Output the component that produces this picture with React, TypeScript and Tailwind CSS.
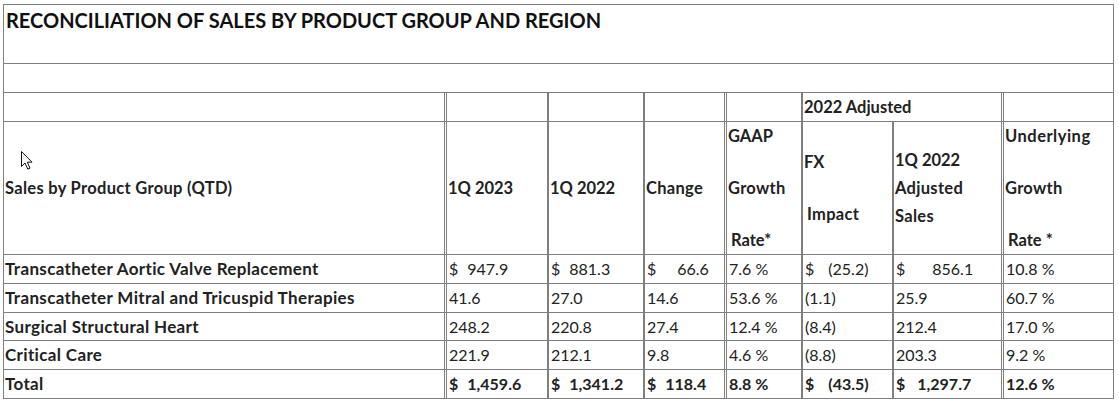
import React from "react";

const F = { fontFamily: "Lato, 'Open Sans', sans-serif" };

function Cursor() {
  return (
    <svg
      className="absolute left-[20px] top-[150px]"
      width="14"
      height="21"
      viewBox="0 0 14 21"
    >
      <path
        d="M1.5 1.5 L1.5 16.5 L5 13 L7.8 19.2 L10 18.2 L7.3 12.2 L12 12.2 Z"
        fill="#fff"
        stroke="#111"
        strokeWidth="1"
        strokeLinejoin="miter"
      />
    </svg>
  );
}

const L1 = "border-l border-t border-[#7f7f7f]";
const L2 = "border-l-2 border-t border-[#7f7f7f] border-t-[#7f7f7f]";
const L3 = "border-l-[3px] border-double border-t border-t-solid border-[#7f7f7f]";

function Cell({
  b,
  className = "",
  children,
}: {
  b: string;
  className?: string;
  children?: React.ReactNode;
}) {
  return <div className={`${b} ${className}`}>{children}</div>;
}

type Row = {
  label: string;
  bold?: boolean;
  c2: React.ReactNode;
  c3: React.ReactNode;
  c4: React.ReactNode;
  c5: string;
  c6: React.ReactNode;
  c7: React.ReactNode;
  c8: string;
};

function Money({ off, v }: { off: string; v: string }) {
  return (
    <span className="flex">
      <span>$</span>
      <span className={off}>{v}</span>
    </span>
  );
}

const rows: Row[] = [
  {
    label: "Transcatheter Aortic Valve Replacement",
    c2: <Money off="ml-[9px]" v="947.9" />,
    c3: <Money off="ml-[9px]" v="881.3" />,
    c4: <Money off="ml-[21px]" v="66.6" />,
    c5: "7.6 %",
    c6: <Money off="ml-[14px]" v="(25.2)" />,
    c7: <Money off="ml-[27px]" v="856.1" />,
    c8: "10.8 %",
  },
  {
    label: "Transcatheter Mitral and Tricuspid Therapies",
    c2: "41.6",
    c3: "27.0",
    c4: "14.6",
    c5: "53.6 %",
    c6: "(1.1)",
    c7: "25.9",
    c8: "60.7 %",
  },
  {
    label: "Surgical Structural Heart",
    c2: "248.2",
    c3: "220.8",
    c4: "27.4",
    c5: "12.4 %",
    c6: "(8.4)",
    c7: "212.4",
    c8: "17.0 %",
  },
  {
    label: "Critical Care",
    c2: "221.9",
    c3: "212.1",
    c4: "9.8",
    c5: "4.6 %",
    c6: "(8.8)",
    c7: "203.3",
    c8: "9.2 %",
  },
  {
    label: "Total",
    bold: true,
    c2: <Money off="ml-[9px]" v="1,459.6" />,
    c3: <Money off="ml-[9px]" v="1,341.2" />,
    c4: <Money off="ml-[9px]" v="118.4" />,
    c5: "8.8 %",
    c6: <Money off="ml-[14px]" v="(43.5)" />,
    c7: <Money off="ml-[12px]" v="1,297.7" />,
    c8: "12.6 %",
  },
];

export default function App() {
  const dataCell = "flex items-center pl-[2px] text-[16px]";
  const hdr = "text-[16.5px] font-bold";
  return (
    <div className="relative min-h-[403px] w-[1119px] bg-white pl-[3px] pt-[4px] text-[#222]" style={F}>
      <div className="grid w-[1111px] grid-cols-[441px_103px_96px_81px_77px_91px_109px_112px] grid-rows-[59px_29px_29px_133px_29px_29px_28px_29px_29px] border-b border-r border-[#7f7f7f]">
        {/* title */}
        <div className="col-span-8 border-l border-t border-[#7f7f7f] pl-[2px] pt-[3px] text-[20px] font-bold leading-[24px] text-[#111]">
          RECONCILIATION OF SALES BY PRODUCT GROUP AND REGION
        </div>
        <div className="col-span-8 border-l border-t border-[#7f7f7f]" />
        {/* header row 1 */}
        <Cell b={L1} />
        <Cell b={L3} />
        <Cell b={L2} />
        <Cell b={L2} />
        <Cell b={L3} />
        <div className={`${L2} col-span-2 flex items-center pl-[1px] ${hdr}`}>
          2022 Adjusted
        </div>
        <Cell b={L3} />
        {/* header row 2 */}
        <Cell b={L1} className={`flex items-center pl-[1px] ${hdr} tracking-[0.3px]`}>
          Sales by Product Group (QTD)
        </Cell>
        <Cell b={L3} className={`flex items-center pl-[1px] ${hdr}`}>
          1Q 2023
        </Cell>
        <Cell b={L2} className={`flex items-center pl-[1px] ${hdr}`}>
          1Q 2022
        </Cell>
        <Cell b={L2} className={`flex items-center pl-[1px] ${hdr} tracking-[0.3px]`}>
          Change
        </Cell>
        <Cell b={L3} className={`flex flex-col justify-center gap-[28px] pl-[1px] ${hdr} leading-[24px]`}>
          <span>GAAP</span>
          <span className="tracking-[0.3px]">Growth</span>
          <span className="pl-[3px]">Rate*</span>
        </Cell>
        <Cell b={L2} className={`flex flex-col justify-center gap-[28px] pl-[1px] ${hdr} leading-[24px]`}>
          <span>FX</span>
          <span className="pl-[3px] tracking-[0.3px]">Impact</span>
        </Cell>
        <Cell b={L2} className={`flex flex-col justify-center gap-[4px] pl-[1px] ${hdr} leading-[24px]`}>
          <span>1Q 2022</span>
          <span className="tracking-[0.3px]">Adjusted</span>
          <span className="tracking-[0.3px]">Sales</span>
        </Cell>
        <Cell b={L3} className={`flex flex-col justify-center gap-[28px] pl-[1px] ${hdr} leading-[24px]`}>
          <span className="tracking-[0.5px]">Underlying</span>
          <span className="tracking-[0.3px]">Growth</span>
          <span className="pl-[3px]">Rate *</span>
        </Cell>
        {/* data */}
        {rows.map((r) => {
          const w = r.bold ? " font-bold" : "";
          return (
            <React.Fragment key={r.label}>
              <Cell b={L1} className="flex items-center pl-[1px] text-[17px] font-bold tracking-[0.35px]">
                {r.label}
              </Cell>
              <Cell b={L3} className={dataCell + w}>{r.c2}</Cell>
              <Cell b={L2} className={dataCell + w}>{r.c3}</Cell>
              <Cell b={L2} className={dataCell + w}>{r.c4}</Cell>
              <Cell b={L3} className={dataCell + w}>{r.c5}</Cell>
              <Cell b={L2} className={dataCell + w}>{r.c6}</Cell>
              <Cell b={L2} className={dataCell + w}>{r.c7}</Cell>
              <Cell b={L3} className={dataCell + w}>{r.c8}</Cell>
            </React.Fragment>
          );
        })}
      </div>
      <Cursor />
    </div>
  );
}
